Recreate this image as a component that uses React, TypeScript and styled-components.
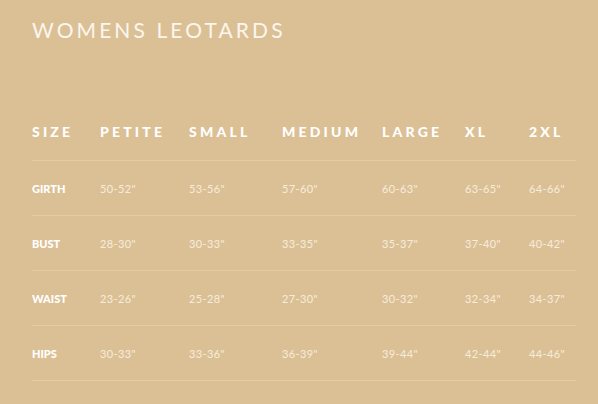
import styled, { createGlobalStyle } from 'styled-components'

const GlobalStyle = createGlobalStyle`
    html, body {
        margin : 0;
        padding : 0;
        background : #dcc095;
    }
`

const sizes = ['PETITE', 'SMALL', 'MEDIUM', 'LARGE', 'XL', '2XL']

const rows = [
    { label : 'GIRTH', values : ['50-52"', '53-56"', '57-60"', '60-63"', '63-65"', '64-66"'] },
    { label : 'BUST', values : ['28-30"', '30-33"', '33-35"', '35-37"', '37-40"', '40-42"'] },
    { label : 'WAIST', values : ['23-26"', '25-28"', '27-30"', '30-32"', '32-34"', '34-37"'] },
    { label : 'HIPS', values : ['30-33"', '33-36"', '36-39"', '39-44"', '42-44"', '44-46"'] },
]

export default function App() {
    return (
        <Page>
            <GlobalStyle />
            <Title>WOMENS LEOTARDS</Title>
            <Table>
                <HeadRow>
                    <HeadCell>SIZE</HeadCell>
                    {sizes.map((s) => (
                        <HeadCell key={s}>{s}</HeadCell>
                    ))}
                </HeadRow>
                {rows.map((r) => (
                    <Row key={r.label}>
                        <Label>{r.label}</Label>
                        {r.values.map((v, i) => (
                            <Value key={i}>{v}</Value>
                        ))}
                    </Row>
                ))}
            </Table>
        </Page>
    )
}

// styled-component
const Page = styled.div`
    width : 598px;
    height : 404px;
    background : #dcc095;
    padding : 19px 22px 0 32px;
    box-sizing : border-box;
    font-family : Lato, "Liberation Sans", sans-serif;
    color : #fff;
`

const Title = styled.h1`
    margin : 0;
    font-size : 21px;
    line-height : 21px;
    font-weight : 400;
    letter-spacing : 3.1px;
    color : #fbf6ee;
`

const grid = `
    display : grid;
    grid-template-columns : 68px 89px 93px 100px 83px 64px 1fr;
    align-items : center;
    border-bottom : 1px solid #e3cba5;
`

const Table = styled.div`
    margin-top : 62px;
    width : 544px;
`

const HeadRow = styled.div`
    ${grid}
    height : 58px;
`

const HeadCell = styled.div`
    font-size : 14px;
    font-weight : 900;
    letter-spacing : 3.2px;
    color : #fff;
`

const Row = styled.div`
    ${grid}
    height : 54px;
`

const Label = styled.div`
    font-size : 11px;
    font-weight : 900;
    color : #fff;
`

const Value = styled.div`
    font-size : 11px;
    font-weight : 400;
    letter-spacing : 0.4px;
    color : #f6ecdd;
`
